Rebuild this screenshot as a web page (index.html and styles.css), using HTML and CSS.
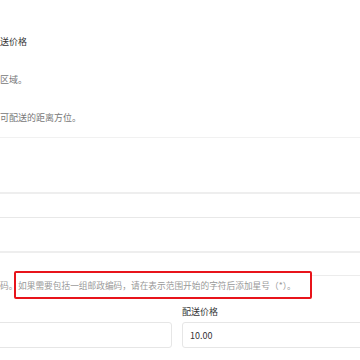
FILE: index.html
```html
<!DOCTYPE html>
<html>
<head>
    <title>配送区域</title>
    <link rel="stylesheet" href="styles.css">
</head>
<body>
    <div class="page">
        <div class="intro">
            <div class="intro-row title">送价格</div>
            <div class="intro-row">区域。</div>
            <div class="intro-row">可配送的距离方位。</div>
        </div>

        <div class="zone-table">
            <div class="zone-row tall"></div>
            <div class="zone-row short"></div>
            <div class="zone-row mid"></div>
        </div>

        <div class="help-row">
            <span class="help-lead">码。</span>
            <span class="help-mark">如果需要包括一组邮政编码，请在表示范围开始的字符后添加星号（*）。</span>
            <span class="help-rest"></span>
        </div>

        <div class="field-grid">
            <div class="field">
                <label class="field-label">&nbsp;</label>
                <input type="text" class="field-input" value="">
            </div>
            <div class="field">
                <label class="field-label">配送价格</label>
                <input type="text" class="field-input" value="10.00">
            </div>
        </div>
    </div>
</body>
</html>
```

FILE: styles.css
```css
html, body {
    margin: 0;
    padding: 0;
    background-color: #fff;
    font-family: "Noto Sans CJK SC", "Liberation Sans", sans-serif;
    color: #333;
}

body {
    width: 360px;
    height: 360px;
    overflow: hidden;
}

.page {
    padding-top: 22px;
}

.intro {
    display: flex;
    flex-direction: column;
}

.intro-row {
    height: 38px;
    display: flex;
    align-items: center;
    font-size: 9px;
    color: #777;
}

.intro-row.title {
    color: #333;
}

.zone-table {
    margin-top: 1px;
    border-top: 1px solid #f1f1f1;
}

.zone-row.tall {
    height: 54px;
    border-bottom: 2px solid #eeeeee;
}

.zone-row.short {
    height: 23px;
    border-bottom: 1px solid #e8e8e8;
}

.zone-row.mid {
    height: 33px;
    border-bottom: 2px solid #eeeeee;
}

.help-row {
    display: flex;
    align-items: flex-start;
    margin-top: 18px;
    font-size: 8.7px;
    color: #999;
}

.help-lead {
    width: 14px;
    margin-top: 8px;
    white-space: nowrap;
}

.help-mark {
    box-sizing: border-box;
    width: 298px;
    height: 28px;
    padding: 0 0 0 2px;
    border: 2px solid #e8141b;
    border-radius: 2px;
    display: flex;
    align-items: center;
    white-space: nowrap;
}

.help-rest {
    flex: 1;
    margin-top: 4px;
    border-top: 1px solid #ececec;
}

.field-grid {
    display: grid;
    grid-template-columns: 192px 200px;
    column-gap: 10px;
    margin-top: 6px;
    margin-left: -20px;
}

.field {
    display: flex;
    flex-direction: column;
}

.field-label {
    font-size: 9px;
    line-height: 14px;
    color: #333;
    margin-bottom: 3px;
}

.field-input {
    box-sizing: border-box;
    height: 26px;
    padding: 0 7px;
    border: 1px solid #e6e6e6;
    border-radius: 3px;
    font-family: "Noto Sans CJK SC", "Liberation Sans", sans-serif;
    font-size: 9px;
    color: #333;
    outline: none;
}
```
